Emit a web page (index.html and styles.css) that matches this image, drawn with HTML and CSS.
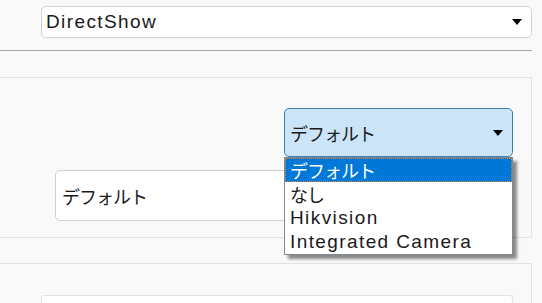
FILE: index.html
```html
<!DOCTYPE html>
<html lang="ja">
<head>
    <meta charset="UTF-8">
    <meta name="viewport" content="width=device-width, initial-scale=1.0">
    <title>カメラ設定</title>
    <link rel="stylesheet" href="styles.css">
</head>
<body>

    <div class="top-row">
        <div class="select">
            <span class="select-text">DirectShow</span>
            <span class="arrow"></span>
        </div>
    </div>

    <hr class="divider">

    <div class="panel">
        <div class="select-row">
            <div class="select-wrap">
                <div class="select focused">
                    <span class="select-text ja">デフォルト</span>
                    <span class="arrow"></span>
                </div>
                <!-- 開いたドロップダウン -->
                <ul class="dropdown">
                    <li class="selected ja">デフォルト</li>
                    <li class="ja">なし</li>
                    <li>Hikvision</li>
                    <li>Integrated Camera</li>
                </ul>
            </div>
        </div>
        <div class="input-row">
            <div class="text-input"><span class="ja">デフォルト</span></div>
        </div>
    </div>

    <div class="panel second">
        <div class="text-input empty"></div>
    </div>

</body>
</html>
```

FILE: styles.css
```css
body {
    margin: 0;
    background-color: #f9f9f9;
    color: #1a1a1a;
    font-family: "Liberation Sans", "Noto Sans CJK JP", sans-serif;
    font-size: 19px;
    letter-spacing: 1.4px;
}

.ja {
    font-family: "Noto Sans CJK JP", sans-serif;
    font-size: 18px;
    letter-spacing: -1px;
}

.top-row {
    padding: 6px 0 0 41px;
    width: 491px;
}

.select {
    box-sizing: border-box;
    display: flex;
    align-items: center;
    justify-content: space-between;
    height: 32px;
    padding: 0 9px 0 4px;
    background-color: #ffffff;
    border: 1px solid #d2d2d2;
    border-radius: 5px;
}

.arrow {
    width: 0;
    height: 0;
    border-left: 5px solid transparent;
    border-right: 5px solid transparent;
    border-top: 6px solid #000000;
}

.divider {
    border: none;
    height: 1px;
    width: 532px;
    margin: 12px 0 0 0;
    background-color: #a9a9a9;
}

.panel {
    box-sizing: border-box;
    width: 532px;
    margin-top: 26px;
    padding: 30px 0 16px 0;
    border: 1px solid #e3e3e3;
    border-left: none;
    background-color: #f9f9f9;
}

.panel.second {
    margin-top: 25px;
    padding: 31px 0 0 41px;
    height: 40px;
    border-bottom: none;
}

.select-row {
    padding-left: 284px;
}

.select-wrap {
    position: relative;
    width: 229px;
}

.select.focused {
    height: 49px;
    padding: 0 9px 0 5px;
    background-color: #cce4f7;
    border-color: #3c7fb1;
}

.dropdown {
    position: absolute;
    top: 49px;
    left: 0;
    box-sizing: border-box;
    width: 229px;
    margin: 0;
    padding: 0;
    list-style: none;
    background-color: #ffffff;
    border: 1px solid #828790;
    box-shadow: 4px 4px 3px rgba(0, 0, 0, 0.45);
    z-index: 2;
}

.dropdown li {
    height: 24px;
    line-height: 24px;
    padding-left: 5px;
    white-space: nowrap;
}

.dropdown li.selected {
    background-color: #0078d7;
    color: #ffffff;
    outline: 1px dotted #e0893a;
    outline-offset: -1px;
}

.input-row {
    padding: 13px 0 0 55px;
}

.text-input {
    box-sizing: border-box;
    display: flex;
    align-items: center;
    width: 458px;
    height: 51px;
    padding-left: 6px;
    background-color: #ffffff;
    border: 1px solid #cdd0d4;
    border-radius: 5px;
}

.text-input.empty {
    width: 472px;
    height: 9px;
    border-radius: 3px 3px 0 0;
    border-color: #e5e5e5;
    border-bottom: none;
}
```
